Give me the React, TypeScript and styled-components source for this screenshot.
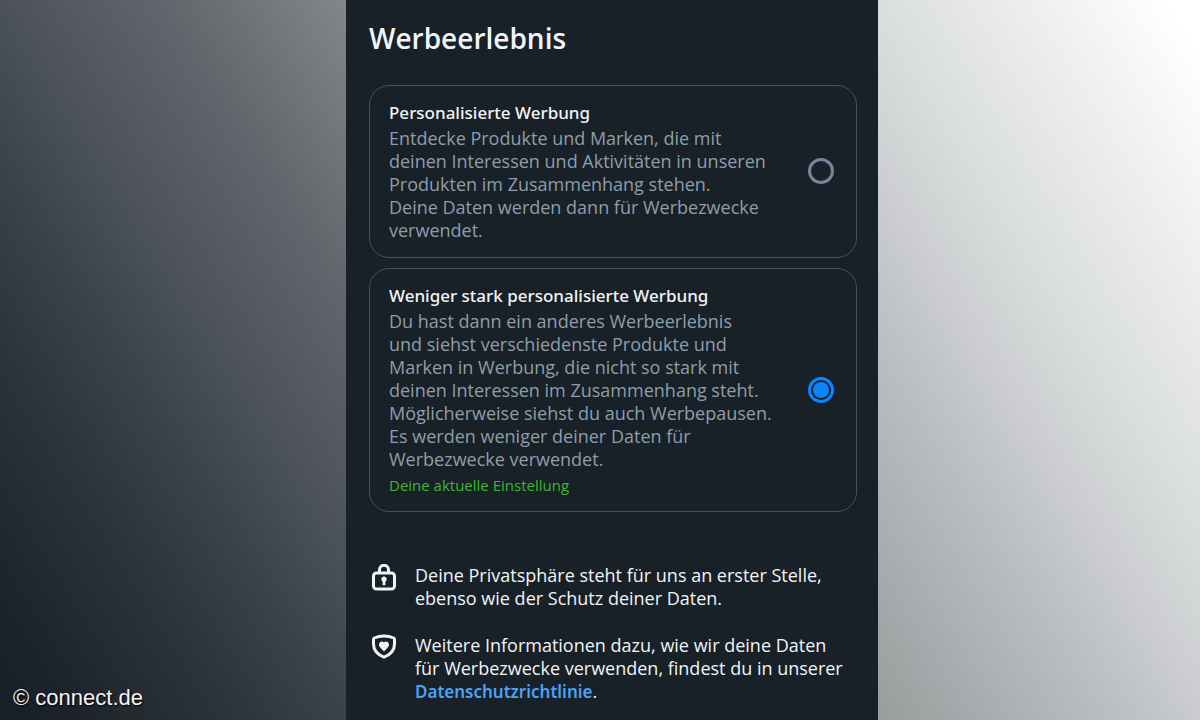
import React from "react";
import styled, { createGlobalStyle } from "styled-components";

const GlobalStyle = createGlobalStyle`
  * { box-sizing: border-box; }
  body { margin: 0; }
`;

const Backdrop = styled.div`
  min-height: 100vh;
  display: grid;
  grid-template-columns: 346fr 532fr 322fr;
  background: linear-gradient(
    58deg,
    #182027 0%,
    #1b2229 4%,
    #2c3339 14%,
    #3b4248 21%,
    #4a5157 27%,
    #62666c 37%,
    #828689 48%,
    #979c9d 53%,
    #b9bdbf 67%,
    #cacccf 73%,
    #dadddd 80%,
    #eeeff0 90%,
    #ffffff 98%
  );
  font-family: "Open Sans", "Noto Sans", sans-serif;
  color: #f1f4f7;
`;

const Credit = styled.footer`
  align-self: end;
  padding: 8px 13px;
  font: 22px/28px "Liberation Sans", Arial, sans-serif;
  color: #f4f4f4;
  text-shadow: 1px 1px 2px #000000;
`;

const Panel = styled.main`
  padding: 20px 21px 16px 23px;
  background: #182127;
`;

const Title = styled.h1`
  margin: 0 0 29px;
  font-size: 28px;
  line-height: 36px;
  font-weight: 600;
`;

const Options = styled.fieldset`
  display: grid;
  gap: 10px;
  margin: 0 0 52px;
  padding: 0;
  border: 0;
`;

const Option = styled.label`
  display: flex;
  align-items: center;
  justify-content: space-between;
  padding: 14px 22px 15px 19px;
  border: 1px solid #405360;
  border-radius: 20px;
  cursor: pointer;
`;

const OptionText = styled.span`
  display: block;
`;

const OptionTitle = styled.span`
  display: block;
  margin-bottom: 2px;
  font-family: "Noto Sans", sans-serif;
  font-size: 17px;
  line-height: 25px;
  font-weight: 500;
`;

const Description = styled.span`
  display: block;
  font-size: 18px;
  line-height: 23px;
  color: #8f9daa;
`;

const Current = styled.span`
  display: block;
  margin-top: 3px;
  font-size: 15px;
  line-height: 22px;
  color: #3fb62c;
`;

const Radio = styled.input`
  appearance: none;
  flex: none;
  display: grid;
  place-items: center;
  width: 26px;
  height: 26px;
  margin: 0;
  border: 3px solid #74869a;
  border-radius: 50%;

  &:checked { border-color: #0a84ff; }
  &:checked::before {
    content: "";
    width: 16px;
    height: 16px;
    border-radius: 50%;
    background: #0a84ff;
  }
`;

const Notes = styled.ul`
  display: grid;
  gap: 24px;
  margin: 0;
  padding: 0;
  list-style: none;
`;

const Note = styled.li`
  display: flex;
  gap: 16px;
  font-size: 18px;
  line-height: 23px;
`;

const Icon = styled.svg`
  flex: none;
  width: 30px;
  height: 28px;
  fill: none;
  stroke: currentColor;
  stroke-width: 3;
`;

const NoteText = styled.p`
  margin: 0;
`;

const PolicyLink = styled.a`
  color: #4ba3f8;
  font-family: "Noto Sans", sans-serif;
  font-size: 17px;
  font-weight: 600;
  text-decoration: none;
`;

interface AdOptionProps {
  title: string;
  lines: string[];
  value: string;
  selected?: boolean;
}

function AdOption({ title, lines, value, selected }: AdOptionProps) {
  return (
    <Option>
      <OptionText>
        <OptionTitle>{title}</OptionTitle>
        {lines.map((line) => (
          <Description key={line}>{line}</Description>
        ))}
        {selected && <Current>Deine aktuelle Einstellung</Current>}
      </OptionText>
      <Radio type="radio" name="ads" value={value} defaultChecked={selected} />
    </Option>
  );
}

export default function App() {
  return (
    <>
      <GlobalStyle />
      <Backdrop>
        <Credit>© connect.de</Credit>
        <Panel>
          <Title>Werbeerlebnis</Title>
          <Options aria-label="Werbeerlebnis">
            <AdOption
              title="Personalisierte Werbung"
              value="personalized"
              lines={[
                "Entdecke Produkte und Marken, die mit",
                "deinen Interessen und Aktivitäten in unseren",
                "Produkten im Zusammenhang stehen.",
                "Deine Daten werden dann für Werbezwecke",
                "verwendet.",
              ]}
            />
            <AdOption
              title="Weniger stark personalisierte Werbung"
              value="less-personalized"
              selected
              lines={[
                "Du hast dann ein anderes Werbeerlebnis",
                "und siehst verschiedenste Produkte und",
                "Marken in Werbung, die nicht so stark mit",
                "deinen Interessen im Zusammenhang steht.",
                "Möglicherweise siehst du auch Werbepausen.",
                "Es werden weniger deiner Daten für",
                "Werbezwecke verwendet.",
              ]}
            />
          </Options>
          <Notes>
            <Note>
              <Icon viewBox="0 0 30 28" aria-hidden="true">
                <rect x="4.500" y="9" width="21" height="16" rx="3" />
                <path d="M10.500 9V5.800a4.500 4.500 0 0 1 9 0V9" />
                <path d="M12.300 15.300a2.700 2.700 0 1 1 4.100 2.200v3.700h-2.800v-3.700a2.700 2.700 0 0 1-1.300-2.200Z" fill="currentColor" stroke="none" />
              </Icon>
              <NoteText>
                Deine Privatsphäre steht für uns an erster Stelle,
                <br />
                ebenso wie der Schutz deiner Daten.
              </NoteText>
            </Note>
            <Note>
              <Icon viewBox="0 0 30 28" aria-hidden="true">
                <path d="M15 2C11.500 2 8 2.800 5.300 4Q4.500 4.400 4.500 5.500V10C4.500 16.500 8.500 20.500 15 23.200C21.500 20.500 25.500 16.500 25.500 10V5.500Q25.500 4.400 24.700 4C22 2.800 18.500 2 15 2Z" strokeLinejoin="round" />
                <path d="M15 17.500L10.800 13C8.300 9.500 12.500 5.500 15 8.600C17.500 5.500 21.700 9.500 19.200 13Z" fill="currentColor" stroke="none" />
              </Icon>
              <NoteText>
                Weitere Informationen dazu, wie wir deine Daten
                <br />
                für Werbezwecke verwenden, findest du in unserer
                <br />
                <PolicyLink href="#datenschutz">Datenschutzrichtlinie</PolicyLink>.
              </NoteText>
            </Note>
          </Notes>
        </Panel>
      </Backdrop>
    </>
  );
}
